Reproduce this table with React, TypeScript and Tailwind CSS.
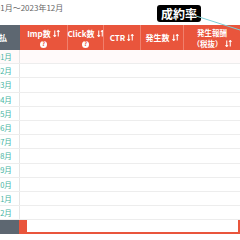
import React from "react";

const months = ["01月", "02月", "03月", "04月", "05月", "06月", "07月", "08月", "09月", "10月", "11月", "12月"];

function SortIcon() {
  return (
    <svg width="7" height="7" viewBox="0 0 8 8" className="ml-[2px] inline-block">
      <path d="M2 0.5V7.5M0.5 6L2 7.5L3.5 6" stroke="white" strokeWidth="1.2" fill="none" />
      <path d="M6 7.5V0.5M4.5 2L6 0.5L7.5 2" stroke="white" strokeWidth="1.2" fill="none" />
    </svg>
  );
}

function HelpIcon() {
  return (
    <span className="mt-[2px] flex h-[7px] w-[7px] items-center justify-center rounded-full bg-white text-[6px] font-bold leading-none text-[#e9553c]">
      ?
    </span>
  );
}

function HeaderCell({ children, help, first }: { children: React.ReactNode; help?: boolean; first?: boolean }) {
  return (
    <div className={`flex flex-col items-center justify-center bg-[#e9553c] text-[8px] font-bold leading-[11px] text-white ${first ? "" : "border-l border-[#f0806d]"}`}>
      <div className="flex items-center whitespace-nowrap">{children}</div>
      {help && <HelpIcon />}
    </div>
  );
}

export default function App() {
  return (
    <div className="relative h-[240px] w-[240px] overflow-hidden bg-white" style={{ fontFamily: '"Noto Sans CJK JP", "Noto Sans", sans-serif' }}>
      <div className="h-[25px] whitespace-nowrap pt-[2px] text-[8px] leading-[12px] text-[#666]">
        <span className="-ml-[30px]">2023年01月～2023年12月</span>
      </div>

      <div className="grid h-[25px] grid-cols-[20px_47px_36px_37px_43px_57px]">
        <div className="flex items-center justify-end overflow-hidden bg-[#5d6771] pr-[13px] text-[8px] font-bold text-white">
          <span className="whitespace-nowrap">支払</span>
        </div>
        <HeaderCell help first>
          Imp数<SortIcon />
        </HeaderCell>
        <HeaderCell help>
          Click数<SortIcon />
        </HeaderCell>
        <HeaderCell>
          CTR<SortIcon />
        </HeaderCell>
        <HeaderCell>
          発生数<SortIcon />
        </HeaderCell>
        <div className="flex flex-col items-center justify-center border-l border-[#f0806d] bg-[#e9553c] text-[7.5px] font-bold leading-[11px] text-white">
          <span>発生報酬</span>
          <span className="flex items-center">（税抜）<SortIcon /></span>
        </div>
      </div>

      <div className="flex flex-col">
        {months.map((m, i) => (
          <div key={m} className={`flex h-[14.2px] border-b border-[#ededed] ${i === 0 ? "bg-[#fffafa]" : ""}`}>
            <div className="flex w-[20px] items-center overflow-hidden border-r border-[#e6e6e6] text-[7.5px] text-[#44b3a1]">
              <span className="-ml-[4px] whitespace-nowrap">{m}</span>
            </div>
            <div className="flex-1" />
          </div>
        ))}
      </div>

      <div className="flex h-[14px]">
        <div className="w-[19px] bg-[#5d6771]" />
        <div className="w-[8px] bg-[#e9553c]" />
        <div className="flex-1 border-b-2 border-r-2 border-[#e9553c]" />
      </div>

      <div className="absolute left-[157px] top-[5px] rounded-[3px] bg-black px-[4px] text-[12px] font-bold leading-[17px] text-white">
        成約率
      </div>
      <svg className="absolute left-[196px] top-[14px]" width="44" height="24" viewBox="0 0 44 24">
        <line x1="0" y1="2" x2="44" y2="16" stroke="#7fcfd6" strokeWidth="1" />
      </svg>
    </div>
  );
}
